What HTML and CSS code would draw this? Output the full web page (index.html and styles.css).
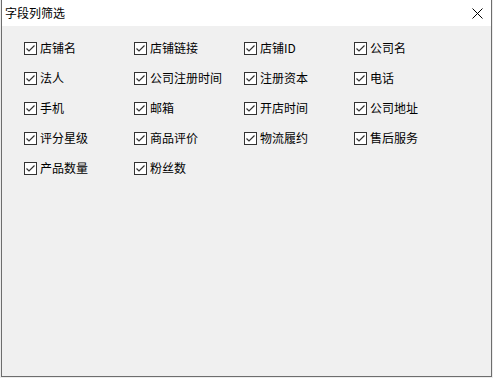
FILE: index.html
```html
<!DOCTYPE html>
<html lang="zh-CN">
<head>
    <meta charset="UTF-8">
    <meta name="viewport" content="width=device-width, initial-scale=1.0">
    <title>字段列筛选</title>
    <link rel="stylesheet" href="styles.css">
</head>
<body>
    <div class="dialog">
        <div class="titlebar">
            <div class="title">字段列筛选</div>
            <div class="close">
                <svg width="11" height="11" viewBox="0 0 11 11">
                    <path d="M0.5 0.5 L10.5 10.5 M10.5 0.5 L0.5 10.5" stroke="#000" stroke-width="1" fill="none"/>
                </svg>
            </div>
        </div>
        <div class="fields">
            <label class="field"><span class="box"></span>店铺名</label>
            <label class="field"><span class="box"></span>店铺链接</label>
            <label class="field"><span class="box"></span>店铺ID</label>
            <label class="field"><span class="box"></span>公司名</label>

            <label class="field"><span class="box"></span>法人</label>
            <label class="field"><span class="box"></span>公司注册时间</label>
            <label class="field"><span class="box"></span>注册资本</label>
            <label class="field"><span class="box"></span>电话</label>

            <label class="field"><span class="box"></span>手机</label>
            <label class="field"><span class="box"></span>邮箱</label>
            <label class="field"><span class="box"></span>开店时间</label>
            <label class="field"><span class="box"></span>公司地址</label>

            <label class="field"><span class="box"></span>评分星级</label>
            <label class="field"><span class="box"></span>商品评价</label>
            <label class="field"><span class="box"></span>物流履约</label>
            <label class="field"><span class="box"></span>售后服务</label>

            <label class="field"><span class="box"></span>产品数量</label>
            <label class="field"><span class="box"></span>粉丝数</label>
        </div>
    </div>

    <script>
        // draw the check mark into every box
        const boxes = document.querySelectorAll(".box");
        const mark = '<svg width="13" height="13" viewBox="0 0 13 13">'
            + '<rect x="0.5" y="0.5" width="12" height="12" fill="#fff" stroke="#333"/>'
            + '<path d="M2.5 6.5 L5 9 L10.5 3.5" stroke="#333" stroke-width="1.2" fill="none"/>'
            + '</svg>';
        for (let i = 0; i < boxes.length; i++) {
            boxes[i].innerHTML = mark;
        }
    </script>
</body>
</html>
```

FILE: styles.css
```css
body {
    margin: 0;
    background-color: #ececec;
    font-family: "Noto Sans CJK SC", "Noto Sans", sans-serif;
    font-size: 12px;
    color: #000;
}

.dialog {
    margin-left: 1px;
    width: 489px;
    height: 376px;
    background-color: #f0f0f0;
    border-left: 1px solid #6d6d6d;
    border-right: 1px solid #6d6d6d;
    border-bottom: 1px solid #6d6d6d;
}

.titlebar {
    height: 26px;
    background-color: #fff;
    display: flex;
    align-items: center;
    justify-content: space-between;
    padding-left: 3px;
    padding-right: 8px;
}

.title {
    font-size: 12px;
    line-height: 14px;
    margin-top: -1px;
}

.close {
    display: flex;
    margin-top: 1px;
}

.fields {
    display: grid;
    grid-template-columns: repeat(4, 110px);
    grid-auto-rows: 30px;
    padding-top: 7px;
    padding-left: 22px;
}

.field {
    display: flex;
    align-items: center;
    gap: 3px;
    white-space: nowrap;
    line-height: 14px;
}

.box {
    display: flex;
    width: 13px;
    height: 13px;
}
```
